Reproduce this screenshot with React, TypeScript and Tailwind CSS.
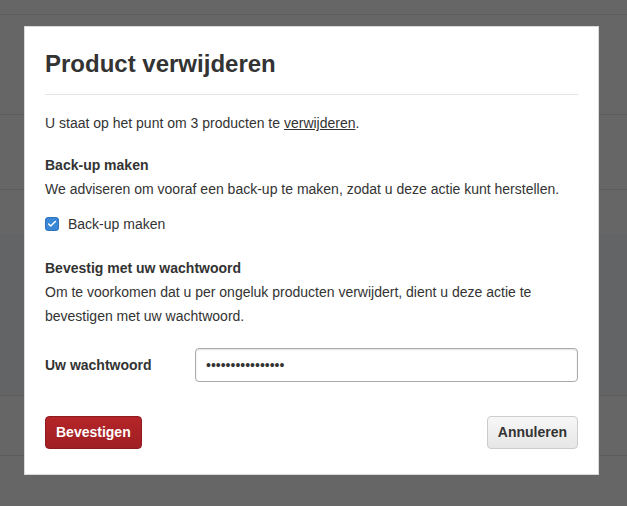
import { Check } from 'lucide-react';

// Faint rows of the table that sits behind the overlay
const rowLines = [14, 114, 189, 234, 395, 455];

export default function App() {
  return (
    <div
      className="relative w-[627px] h-[506px] bg-[#666666] overflow-hidden text-[#333333]"
      style={{ fontFamily: '"Liberation Sans", Arial, sans-serif' }}
    >
      {rowLines.map((y) => (
        <div key={y} className="absolute left-0 right-0 h-px bg-[#5c5c5c]" style={{ top: y }} />
      ))}
      <div className="absolute left-0 right-0 top-[234px] h-[161px] bg-[#626466]" />

      <div className="absolute left-[24px] top-[26px] w-[575px] h-[449px] bg-white border border-[#d9d9d9] px-[20px]">
        <h1 className="pt-[22px] pb-[15px] text-[24px] leading-[30px] font-bold border-b border-[#e5e5e5]">
          Product verwijderen
        </h1>

        <p className="mt-[16px] text-[14px] leading-[24px]">
          U staat op het punt om 3 producten te <span className="underline">verwijderen</span>.
        </p>

        <h2 className="mt-[18px] text-[14px] leading-[24px] font-bold">Back-up maken</h2>
        <p className="text-[14px] leading-[24px]">
          We adviseren om vooraf een back-up te maken, zodat u deze actie kunt herstellen.
        </p>
        <label className="mt-[11px] flex items-center gap-[9px] text-[14px] leading-[24px]">
          <span className="w-[14px] h-[14px] rounded-[3px] bg-[#3a87d6] border border-[#2f73b8] flex items-center justify-center">
            <Check className="w-[10px] h-[10px] text-white" strokeWidth={3.5} />
          </span>
          Back-up maken
        </label>

        <h2 className="mt-[20px] text-[14px] leading-[24px] font-bold">Bevestig met uw wachtwoord</h2>
        <p className="text-[14px] leading-[24px]">
          Om te voorkomen dat u per ongeluk producten verwijdert, dient u deze actie te
          bevestigen met uw wachtwoord.
        </p>

        <div className="mt-[20px] flex items-center">
          <span className="w-[150px] text-[14px] font-bold">Uw wachtwoord</span>
          <div className="flex-1 h-[34px] rounded-[4px] border border-[#aaaaaa] shadow-[inset_0_1px_2px_rgba(0,0,0,0.12)] flex items-center px-[10px] text-[14px]">
            ••••••••••••••••
          </div>
        </div>

        <div className="mt-[34px] flex justify-between">
          <button className="h-[33px] px-[10px] rounded-[4px] bg-gradient-to-b from-[#b42529] to-[#a01f23] border border-[#8f1b1f] text-white text-[14px] font-bold">
            Bevestigen
          </button>
          <button className="h-[33px] px-[10px] rounded-[4px] bg-gradient-to-b from-[#f7f7f7] to-[#e6e6e6] border border-[#cccccc] text-[#333333] text-[14px] font-bold">
            Annuleren
          </button>
        </div>
      </div>
    </div>
  );
}
